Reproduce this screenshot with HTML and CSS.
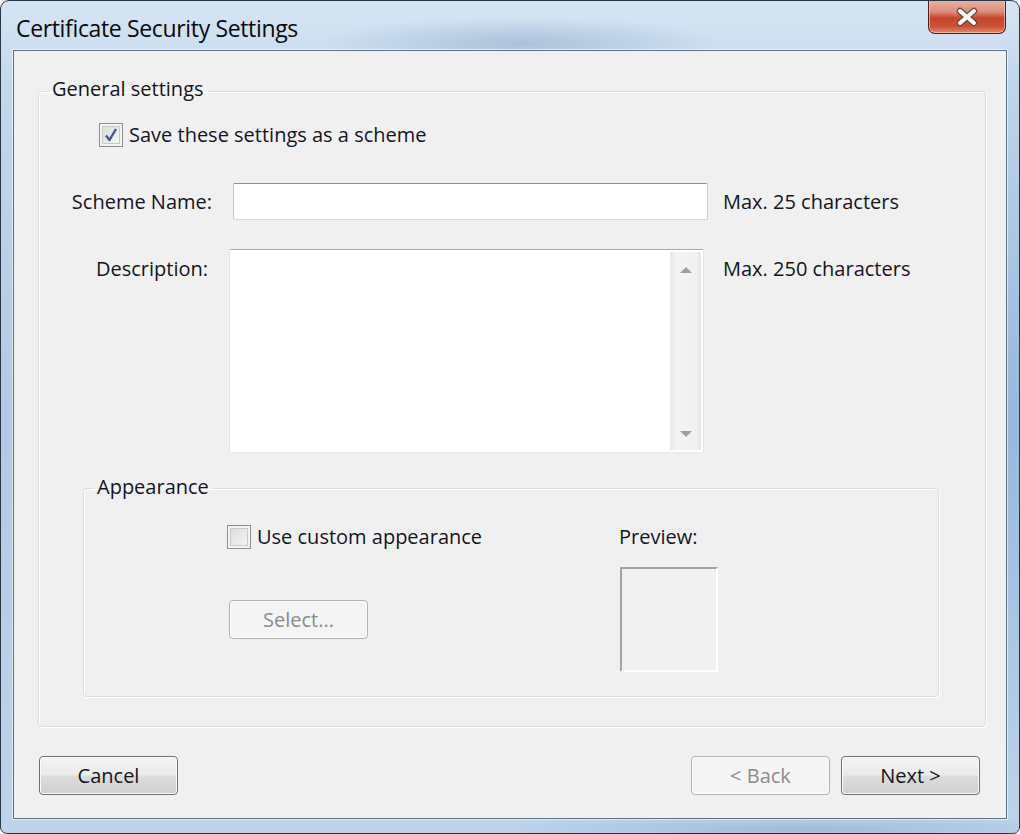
FILE: index.html
```html
<!DOCTYPE html>
<html>
<head>
<meta charset="utf-8">
<title>Certificate Security Settings</title>
<link rel="stylesheet" href="styles.css">
</head>
<body>
<div class="window">
  <div class="titlebar">
    <div class="title">Certificate Security Settings</div>
    <div class="close">
      <svg width="26" height="20" viewBox="0 0 26 20">
        <path d="M6 4 L20 16 M20 4 L6 16" stroke="#6b4a45" stroke-width="6.5" stroke-linecap="round" fill="none"/>
        <path d="M6 4 L20 16 M20 4 L6 16" stroke="#ffffff" stroke-width="4" stroke-linecap="round" fill="none"/>
      </svg>
    </div>
  </div>
  <div class="client">
    <fieldset class="group general">
      <legend>General settings</legend>
      <div class="check save">
        <span class="box">
          <svg width="18" height="18" viewBox="0 0 18 18"><path d="M4 9.5 L7.5 14 L14 3" stroke="#42598f" stroke-width="2.4" fill="none" stroke-linejoin="round"/></svg>
        </span>
        <span>Save these settings as a scheme</span>
      </div>
      <div class="form">
        <div class="lbl">Scheme Name:</div>
        <div class="field"><div class="input"></div></div>
        <div class="note">Max. 25 characters</div>
        <div class="lbl desc">Description:</div>
        <div class="field">
          <div class="textarea">
            <div class="ta-body"></div>
            <div class="vscroll">
              <svg width="14" height="8" viewBox="0 0 14 8"><path d="M7 1 L13 7 L1 7 Z" fill="#a0a0a0"/></svg>
              <svg width="14" height="8" viewBox="0 0 14 8"><path d="M1 1 L13 1 L7 7 Z" fill="#a0a0a0"/></svg>
            </div>
          </div>
        </div>
        <div class="note">Max. 250 characters</div>
      </div>
      <fieldset class="group appearance">
        <legend>Appearance</legend>
        <div class="app-row">
          <div class="app-left">
            <div class="check"><span class="box"></span><span>Use custom appearance</span></div>
            <button class="btn disabled select">Select...</button>
          </div>
          <div class="app-right">
            <div class="preview-lbl">Preview:</div>
            <div class="preview"></div>
          </div>
        </div>
      </fieldset>
    </fieldset>
    <div class="buttons">
      <button class="btn">Cancel</button>
      <div class="spacer"></div>
      <button class="btn disabled">&lt; Back</button>
      <button class="btn">Next &gt;</button>
    </div>
  </div>
</div>
</body>
</html>
```
FILE: styles.css
```css
* { box-sizing: border-box; }
html, body { margin: 0; padding: 0; }
body {
  width: 1020px;
  height: 834px;
  background: #ffffff;
  font-family: "Open Sans", "Noto Sans", sans-serif;
  font-size: 20px;
  color: #14141e;
  overflow: hidden;
}
.window {
  width: 1020px;
  height: 834px;
  border: 1px solid #263645;
  border-radius: 9px 9px 7px 7px;
  padding: 0 12px 14px 12px;
  display: flex;
  flex-direction: column;
  background:
    radial-gradient(ellipse 200px 26px at 520px 42px, rgba(130,158,192,0.45), rgba(130,158,192,0) 100%),
    radial-gradient(ellipse 60px 400px at 1012px 420px, rgba(110,150,200,0.5), rgba(110,150,200,0) 100%),
    radial-gradient(ellipse 60px 400px at 6px 420px, rgba(150,180,215,0.4), rgba(150,180,215,0) 100%),
    radial-gradient(ellipse 300px 14px at 800px 828px, rgba(120,150,190,0.4), rgba(120,150,190,0) 100%),
    linear-gradient(180deg, #d6e5f4 0%, #c6daee 10%, #c2d7ec 50%, #bcd3ea 100%);
  overflow: hidden;
}
.titlebar {
  height: 49px;
  display: flex;
  justify-content: space-between;
  align-items: flex-start;
  padding-left: 3px;
}
.title {
  margin-top: 12px;
  font-size: 23px;
  line-height: 30px;
  color: #0a0a0a;
  letter-spacing: -0.35px;
}
.close {
  width: 78px;
  height: 34px;
  margin-top: -1px;
  margin-right: 1px;
  border: 1px solid #4a1f18;
  border-top: none;
  border-radius: 0 0 7px 7px;
  background: linear-gradient(180deg, #eab3a6 0%, #dd8d7b 35%, #c5452e 55%, #cc5237 80%, #e0896b 100%);
  box-shadow: inset 0 0 0 1px rgba(255,220,210,0.55);
  display: flex;
  align-items: center;
  justify-content: center;
}
.client {
  flex: 1;
  background: #f0f0f0;
  border: 1px solid #5f6f80;
  box-shadow: 0 0 0 1px rgba(255,255,255,0.6);
  padding: 26px 20px 21px 24px;
  display: flex;
  flex-direction: column;
}
.group {
  margin: 0;
  padding: 0;
  min-width: 0;
  border: 1px solid #d5dfe5;
  border-radius: 4px;
  box-shadow: inset 1px 1px 0 #ffffff, 1px 1px 0 #ffffff;
}
.group legend {
  padding: 0 4px 4px 3px;
  margin-left: 10px;
  line-height: 24px;
  color: #14141e;
}
.appearance legend {
  padding: 1px 4px 3px 3px;
}
.check {
  display: flex;
  align-items: center;
  gap: 6px;
  line-height: 24px;
}
.box {
  width: 24px;
  height: 24px;
  border: 1px solid #8f8f8f;
  box-shadow: inset 0 0 0 2px #f4f4f4, inset 0 0 0 3px #c8c8c8;
  background-color: #f4f4f4;
  background-image: linear-gradient(135deg, #d8d8d8, #f9f9f9);
  display: flex;
  align-items: center;
  justify-content: center;
  flex: none;
}
.save {
  margin: 18px 0 0 60px;
}
.form {
  display: grid;
  grid-template-columns: 173px 479px auto;
  grid-template-rows: 37px 204px;
  column-gap: 17px;
  row-gap: 29px;
  margin-top: 36px;
}
.lbl {
  text-align: right;
  line-height: 37px;
}
.lbl.desc {
  padding-right: 4px;
  line-height: 40px;
}
.note {
  margin-left: -2px;
  line-height: 37px;
}
.form .note:last-child {
  line-height: 40px;
}
.input {
  margin-left: 4px;
  height: 37px;
  background: #ffffff;
  border: 1px solid;
  border-color: #5b9bd1 #b0cee9 #c6dcef #b0cee9;
  border-radius: 2px;
}
.textarea {
  width: 475px;
  height: 204px;
  background: #ffffff;
  border: 1px solid;
  border-color: #a7a9ad #dfe3e8 #e3e9ef #dfe3e8;
  border-radius: 2px;
  padding: 2px;
  display: flex;
}
.ta-body { flex: 1; }
.vscroll {
  width: 31px;
  background: linear-gradient(90deg, #e6e6e6 0%, #f3f3f3 15%, #f1f1f1 85%, #e3e3e3 100%);
  border-left: 1px solid #e8e8e8;
  display: flex;
  flex-direction: column;
  align-items: center;
  justify-content: space-between;
  padding: 14px 0 12px;
}
.appearance {
  margin: 21px 46px 29px 44px;
}
.app-row {
  display: flex;
  padding: 23px 0 24px 143px;
}
.app-left {
  width: 392px;
  display: flex;
  flex-direction: column;
  align-items: flex-start;
}
.select {
  margin-top: 51px;
  margin-left: 2px;
}
.app-right {
  display: flex;
  flex-direction: column;
}
.preview-lbl { line-height: 24px; }
.preview {
  margin-top: 18px;
  margin-left: 1px;
  width: 98px;
  height: 105px;
  border: 2px solid;
  border-color: #a3a3a3 #ffffff #ffffff #a3a3a3;
}
.buttons {
  display: flex;
  gap: 11px;
  margin-top: 29px;
  padding: 0 6px 0 1px;
}
.spacer { flex: 1; }
.btn {
  width: 139px;
  height: 39px;
  font-family: "Open Sans", "Noto Sans", sans-serif;
  font-size: 20px;
  color: #14141e;
  border: 1px solid #707070;
  border-radius: 4px;
  background: linear-gradient(180deg, #f3f3f3 0%, #ebebeb 48%, #dddddd 52%, #cfcfcf 100%);
  box-shadow: inset 0 0 0 1px #fbfbfb;
  padding: 0;
}
.btn.disabled {
  color: #8b8b8b;
  border-color: #adb2b5;
  background: #f4f4f4;
  box-shadow: inset 0 0 0 1px #fcfcfc;
}
```
